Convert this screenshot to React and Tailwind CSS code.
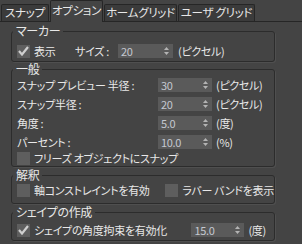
import React from "react";

const font = {
  fontFamily: '"Noto Sans CJK JP", "Noto Sans", sans-serif',
};

function Spinner() {
  return (
    <svg width="5" height="8" viewBox="0 0 5 8" className="shrink-0">
      <path d="M0 3 L2.5 0 L5 3 Z" fill="#b4b4b4" />
      <path d="M0 5 L2.5 8 L5 5 Z" fill="#b4b4b4" />
    </svg>
  );
}

function NumField({ value, w = "w-[54px]" }) {
  return (
    <div
      className={`${w} flex h-[14px] shrink-0 items-center justify-between bg-[#5a5a5a] pl-[3px] pr-[4px] text-[11px] leading-none text-[#c4c8d0]`}
    >
      <span>{value}</span>
      <Spinner />
    </div>
  );
}

function Check({ checked }) {
  return (
    <div className="flex h-[13px] w-[13px] shrink-0 items-center justify-center bg-[#5e5e5e]">
      {checked && (
        <svg width="11" height="10" viewBox="0 0 11 10">
          <path
            d="M1 5 L4 8.5 L10 1"
            fill="none"
            stroke="#cfcfcf"
            strokeWidth="2.2"
          />
        </svg>
      )}
    </div>
  );
}

function Group({ title, children, className = "" }) {
  return (
    <fieldset
      className={`m-0 min-w-0 rounded-[3px] border border-[#2c2c2c] p-0 shadow-[1px_1px_0_0_#4f4f4f] ${className}`}
    >
      <legend className="ml-[1px] px-[3px] text-[12px] leading-[12px] text-[#e8e8e8]">
        {title}
      </legend>
      {children}
    </fieldset>
  );
}

const tabs = [
  { label: "スナップ", w: "w-[48px]" },
  { label: "オプション", w: "w-[53px]", active: true },
  { label: "ホームグリッド", w: "w-[73px]" },
  { label: "ユーザ グリッド", w: "w-[77px]" },
];

export default function App() {
  return (
    <div
      className="h-[244px] w-[302px] overflow-hidden whitespace-nowrap bg-[#444444] text-[11px] tracking-[-0.3px] text-[#e8e8e8] [font-feature-settings:'palt']"
      style={font}
    >
      {/* タブ */}
      <div className="flex h-[22px] items-end gap-[1px] border-b border-[#262626] pl-[1px]">
        {tabs.map((t) =>
          t.active ? (
            <div
              key={t.label}
              className={`${t.w} -mb-[1px] flex h-[22px] shrink-0 items-center justify-center rounded-t-[2px] border border-b-0 border-[#262626] bg-[#444444] pb-[1px] text-[11.5px] leading-none`}
            >
              {t.label}
            </div>
          ) : (
            <div
              key={t.label}
              className={`${t.w} flex h-[17px] shrink-0 items-center justify-center rounded-t-[2px] border border-b-0 border-[#262626] bg-[#3b3b3b] text-[11.5px] leading-none`}
            >
              {t.label}
            </div>
          )
        )}
      </div>

      <div className="flex w-[275px] flex-col pl-[11px] pt-[3px]">
        {/* マーカー */}
        <Group title="マーカー">
          <div className="mb-[3px] mt-[7px] flex h-[14px] items-center pl-[5px]">
            <div className="flex w-[58px] items-center gap-[4px]">
              <Check checked />
              <span className="leading-none">表示</span>
            </div>
            <span className="w-[43px] leading-none">サイズ :</span>
            <NumField value="20" w="w-[55px]" />
            <span className="ml-[5px] leading-none">(ピクセル)</span>
          </div>
        </Group>

        {/* 一般 */}
        <Group title="一般" className="mt-[1px]">
          <div className="flex flex-col pb-[1px] pl-[5px] pt-[3px]">
            {[
              ["スナップ プレビュー 半径 :", "30", "(ピクセル)"],
              ["スナップ半径 :", "20", "(ピクセル)"],
              ["角度 :", "5.0", "(度)"],
              ["パーセント :", "10.0", "(%)"],
            ].map(([label, v, unit]) => (
              <div key={label} className="mb-[5px] flex h-[14px] items-center">
                <span className="w-[141px] leading-none">{label}</span>
                <NumField value={v} />
                <span className="ml-[4px] leading-none">{unit}</span>
              </div>
            ))}
            <div className="-mt-[3px] flex h-[14px] items-center gap-[4px]">
              <Check />
              <span className="leading-none">フリーズ オブジェクトにスナップ</span>
            </div>
          </div>
        </Group>

        {/* 解釈 */}
        <Group title="解釈" className="mt-[2px]">
          <div className="mb-[6px] mt-[2px] flex h-[14px] items-center pl-[5px]">
            <div className="flex w-[151px] items-center gap-[4px]">
              <Check />
              <span className="leading-none">軸コンストレイントを有効</span>
            </div>
            <div className="flex items-center gap-[4px]">
              <Check />
              <span className="leading-none">ラバー バンドを表示</span>
            </div>
          </div>
        </Group>

        {/* シェイプの作成 */}
        <Group title="シェイプの作成" className="mt-[2px]">
          <div className="mb-[3px] mt-[5px] flex h-[14px] items-center pl-[5px]">
            <div className="flex flex-1 items-center gap-[4px]">
              <Check checked />
              <span className="leading-none">シェイプの角度拘束を有効化</span>
            </div>
            <NumField value="15.0" w="w-[53px]" />
            <span className="ml-[4px] mr-[8px] leading-none">(度)</span>
          </div>
        </Group>
      </div>
    </div>
  );
}
